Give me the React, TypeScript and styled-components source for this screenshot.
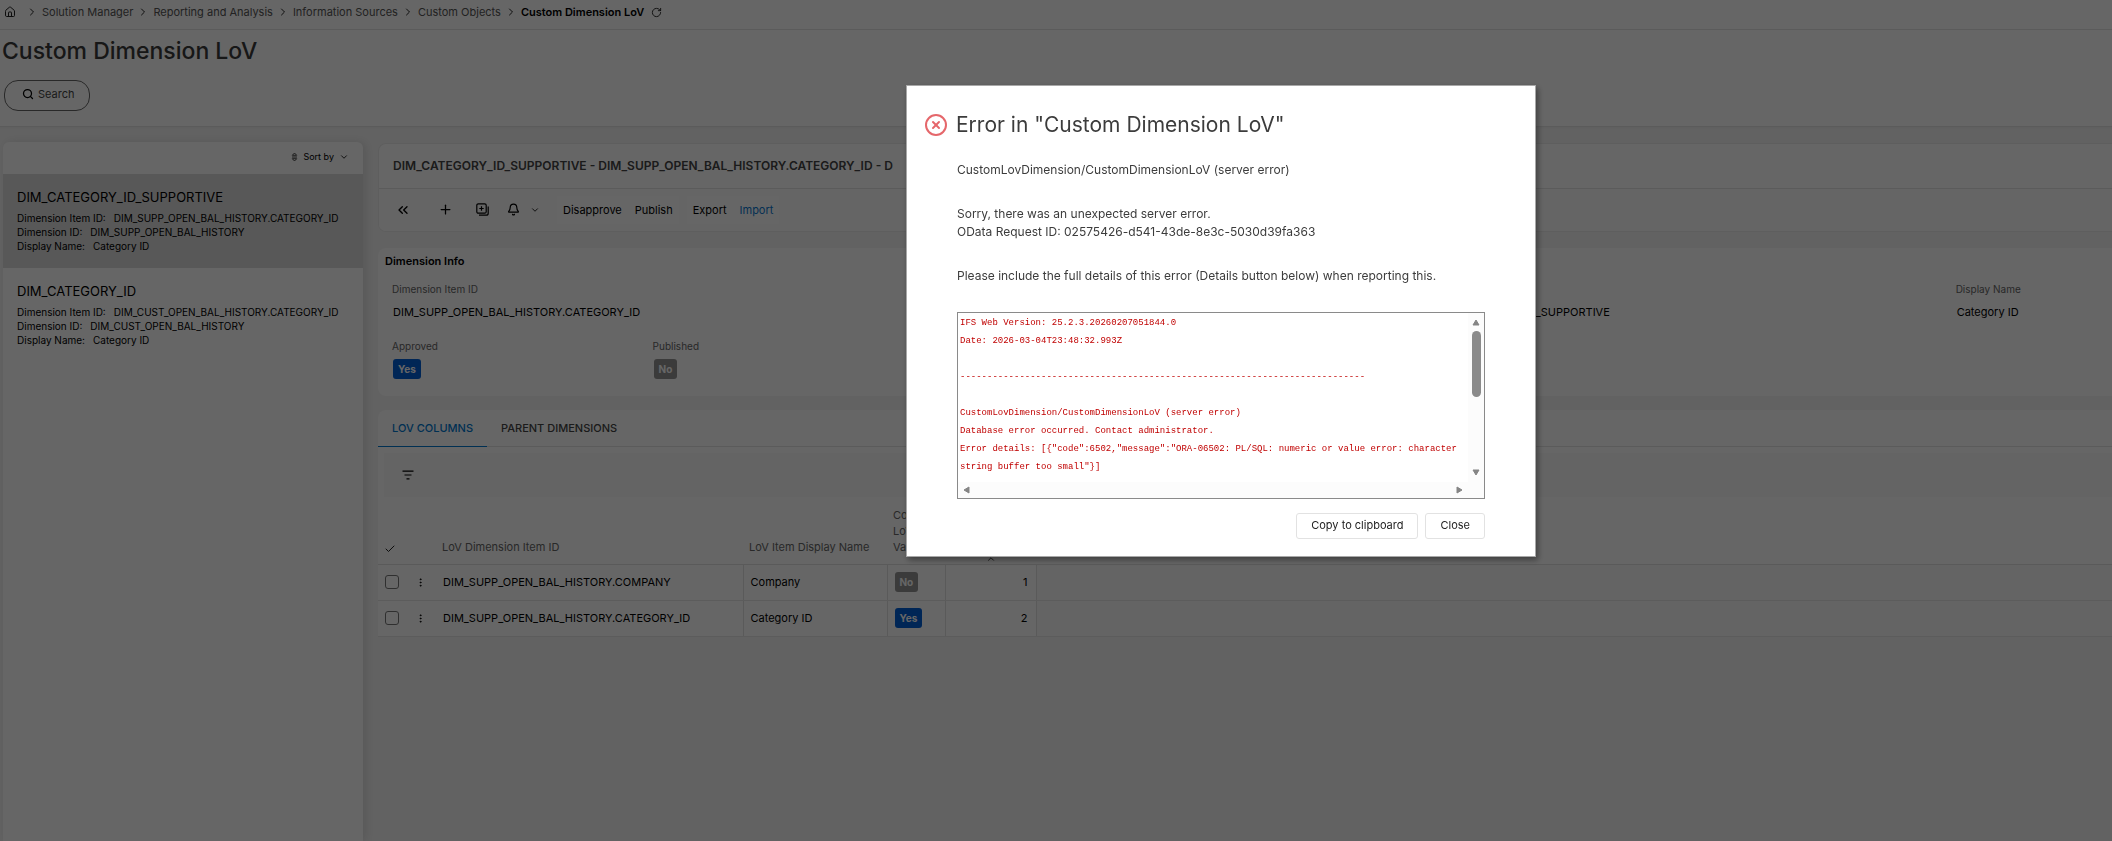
import React from 'react';
import styled, { createGlobalStyle } from 'styled-components';
import {
  Bell,
  Check,
  ChevronDown,
  ChevronRight,
  ChevronUp,
  ChevronsLeft,
  CircleX,
  EllipsisVertical,
  House,
  Plus,
  RotateCw,
  Search,
} from 'lucide-react';

const GlobalStyle = createGlobalStyle`
  *, *::before, *::after { box-sizing: border-box; }
  body {
    margin: 0;
    background: #f5f5f5;
    color: #000;
    font: 400 11px/16px Inter, "Liberation Sans", sans-serif;
    overflow: hidden;
  }
  button, input, textarea { font: inherit; color: inherit; margin: 0; }
  h1, h2, h3, p, dl, dd, ul, nav { margin: 0; padding: 0; }
`;

/* ---------- page frame ---------- */

const Page = styled.div`
  min-height: 100vh;
  display: flex;
  flex-direction: column;
`;

const PageHeader = styled.header`
  background: #fff;
  border-bottom: 1px solid #e4e4e4;
  box-shadow: 0 1px 2px #ececec;
`;

const Breadcrumbs = styled.nav`
  display: flex;
  align-items: center;
  gap: 4px;
  height: 30px;
  padding: 0 4px 5px;
  border-bottom: 1px solid #e4e4e4;
  color: #222;
  svg { flex: none; }
`;

const HomeLink = styled.a`
  display: flex;
  margin-right: 6px;
  color: inherit;
`;

const Crumb = styled.a<{ $current?: boolean }>`
  color: ${(p) => (p.$current ? '#000' : '#555')};
  font-weight: ${(p) => (p.$current ? 600 : 400)};
  text-decoration: none;
  white-space: nowrap;
`;

const IconButton = styled.button`
  display: flex;
  align-items: center;
  justify-content: center;
  padding: 0;
  border: 0;
  background: none;
`;

const RefreshButton = styled(IconButton)`
  margin-left: 3px;
`;

const PageTitle = styled.h1`
  padding: 7px 2px 0;
  font-size: 23px;
  line-height: 28px;
  font-weight: 500;
  color: #3a3a3a;
`;

const SearchRow = styled.div`
  padding: 15px 4px;
`;

const SearchButton = styled.button`
  display: flex;
  align-items: center;
  gap: 4px;
  height: 31px;
  padding: 0 14px 3px 17px;
  border: 1px solid #666;
  border-radius: 14px;
  background: #fff;
  color: #444;
`;

const Body = styled.div`
  flex: 1;
  display: flex;
  gap: 15px;
  padding: 15px 0 0 3px;
`;

/* ---------- record list ---------- */

const Sidebar = styled.aside`
  flex: none;
  width: 360px;
  border-radius: 6px 6px 0 0;
  background: #fff;
  box-shadow: 3px 0 8px #dcdcdc;
`;

const SortBar = styled.div`
  display: flex;
  justify-content: flex-end;
  align-items: center;
  height: 32px;
  padding: 0 14px 2px 0;
`;

const SortButton = styled.button`
  display: flex;
  align-items: center;
  gap: 5px;
  padding: 0;
  border: 0;
  background: none;
  font-size: 9px;
`;

const Record = styled.article<{ $selected?: boolean }>`
  padding: 15px 14px;
  background: ${(p) => (p.$selected ? '#dcdcdc' : '#fff')};
`;

const RecordTitle = styled.h3`
  margin-bottom: 6px;
  font-size: 13px;
  font-weight: 400;
  line-height: 16px;
`;

const RecordLine = styled.p`
  display: flex;
  gap: 8px;
  font-size: 10px;
  line-height: 14px;
  white-space: nowrap;
`;

/* ---------- detail area ---------- */

const Main = styled.main`
  flex: 1;
  min-width: 0;
`;

const Card = styled.section`
  overflow: hidden;
  border-radius: 8px 0 0 0;
  background: #fff;
`;

const HeadCard = styled(Card)`
  margin: 1px 0 16px;
  border: 1px solid #ebebeb;
  border-right: 0;
  border-radius: 8px 0 0 8px;
`;

const RecordHeading = styled.h2`
  padding: 14px;
  border-bottom: 1px solid #e4e4e4;
  font-size: 12px;
  line-height: 16px;
  font-weight: 600;
  color: #444;
  white-space: nowrap;
`;

const Toolbar = styled.div`
  display: flex;
  align-items: center;
  height: 42px;
  padding: 0 0 1px 12px;
  background: #fcfcfc;
`;

const ToolIcon = styled(IconButton)<{ $w: number }>`
  width: ${(p) => p.$w}px;
  height: 28px;
`;

const NotifyButton = styled(IconButton)`
  gap: 10px;
  height: 28px;
  margin: 0 17px 0 18px;
`;

const CommandGroup = styled.div`
  display: flex;
  gap: 13px;
  height: 28px;
  padding: 0 6px;
  margin-right: 8px;
  background: #fff;
`;

const Command = styled.button<{ $accent?: boolean }>`
  padding: 0;
  border: 0;
  background: none;
  color: ${(p) => (p.$accent ? '#0a78d0' : '#000')};
`;

const InfoCard = styled(Card)`
  height: 148px;
  padding: 5px 0 0 7px;
  border-radius: 8px 0 0 8px;
  margin-bottom: 14px;
`;

const SectionTitle = styled.h2`
  font-size: 11px;
  line-height: 16px;
  font-weight: 600;
`;

const FieldGrid = styled.dl`
  display: grid;
  grid-template-columns: repeat(6, minmax(0, 5fr)) minmax(0, 3fr);
  padding: 12px 0 0 7px;
`;

const Field = styled.div<{ $column: number }>`
  grid-column: ${(p) => p.$column};
  height: 57px;
  white-space: nowrap;
`;

const FieldLabel = styled.dt`
  font-size: 10px;
  color: #666;
`;

const FieldValue = styled.dd<{ $badge?: boolean }>`
  padding: ${(p) => (p.$badge ? '5px 0 0 1px' : '7px 0 0 1px')};
`;

const Badge = styled.span<{ $on?: boolean }>`
  display: inline-block;
  padding: 0 5px;
  border-radius: 3px;
  background: ${(p) => (p.$on ? '#0060d8' : '#949494')};
  color: #fff;
  font-weight: 700;
  font-size: 10px;
  line-height: 20px;
  vertical-align: top;
`;

const TabList = styled.div`
  display: flex;
  height: 37px;
  border-bottom: 1px solid #e4e4e4;
`;

const Tab = styled.button<{ $active?: boolean }>`
  height: 37px;
  padding: 0 14px;
  border: 0;
  border-bottom: ${(p) => (p.$active ? '1px solid #0078d0' : '1px solid transparent')};
  background: none;
  font-weight: 500;
  color: ${(p) => (p.$active ? '#0078d0' : '#444')};
`;

const FilterBar = styled.div`
  display: flex;
  align-items: center;
  height: 44px;
  margin: 6px 0 0 6px;
  padding-left: 18px;
  background: #fafafa;
`;

const Table = styled.table`
  width: 100%;
  border-collapse: collapse;
  table-layout: fixed;
`;

const Col = styled.col<{ $w?: number }>`
  width: ${(p) => (p.$w ? `${p.$w}px` : 'auto')};
`;

const HeadCell = styled.th`
  height: 67px;
  padding: 0 0 9px 6px;
  border-bottom: 1px solid #e0e0e0;
  color: #666;
  font-weight: 400;
  text-align: left;
  vertical-align: bottom;
  white-space: nowrap;
  svg { display: block; color: #222; }
`;

const SortedHeadCell = styled(HeadCell)`
  padding: 0;
  svg { margin: 0 auto; }
`;

const Cell = styled.td<{ $ruled?: boolean; $end?: boolean; $filler?: boolean }>`
  height: 36px;
  padding: ${(p) => (p.$end ? '0 8px 0 0' : '0 0 0 7px')};
  border-bottom: 1px solid #e6e6e6;
  border-right: ${(p) => (p.$ruled ? '1px solid #e0e0e0' : '0')};
  background: ${(p) => (p.$filler ? '#fafafa' : '#fff')};
  text-align: ${(p) => (p.$end ? 'right' : 'left')};
  white-space: nowrap;
`;

const Checkbox = styled.input`
  appearance: none;
  display: block;
  width: 14px;
  height: 14px;
  border: 1px solid #777;
  border-radius: 3px;
`;

/* ---------- error dialog ---------- */

const Backdrop = styled.div`
  position: fixed;
  inset: 0;
  padding-top: 85px;
  background: rgba(0, 0, 0, 0.6);
`;

const Dialog = styled.section`
  display: flex;
  flex-direction: column;
  width: 630px;
  margin-left: calc(50% - 150px);
  padding: 24px 50px 17px 17px;
  border: 1px solid #a8a8a8;
  background: #fff;
  box-shadow: 2px 3px 6px rgba(0, 0, 0, 0.4);
  color: #3c3c3c;
`;

const DialogTitle = styled.h2`
  display: flex;
  align-items: center;
  gap: 8px;
  font-size: 21px;
  line-height: 30px;
  font-weight: 400;
`;

const DialogBody = styled.div`
  padding-left: 33px;
  font-size: 12px;
  line-height: 18px;
`;

const Message = styled.p`
  margin-top: 26px;
  &:first-child { margin-top: 21px; }
`;

const LogFrame = styled.div`
  display: grid;
  grid-template-columns: 1fr 16px;
  grid-template-rows: 1fr 16px;
  height: 187px;
  margin-top: 27px;
  border: 1px solid #8a8a8a;
`;

const Log = styled.textarea`
  padding: 1px 2px 0;
  border: 0;
  outline: 0;
  resize: none;
  overflow: hidden;
  background: #fff;
  color: #c00000;
  font: 9px/18px "Liberation Mono", monospace;
`;

const ScrollTrack = styled.div<{ $horizontal?: boolean }>`
  display: flex;
  flex-direction: ${(p) => (p.$horizontal ? 'row' : 'column')};
  align-items: center;
  justify-content: space-between;
  padding: ${(p) => (p.$horizontal ? '0 5px' : '6px 0')};
  background: #fcfcfc;
`;

const ScrollThumb = styled.div`
  width: 9px;
  height: 66px;
  margin: 5px 0 auto;
  border-radius: 5px;
  background: #8b8b8b;
`;

const Actions = styled.div`
  display: flex;
  justify-content: flex-end;
  gap: 7px;
  margin-top: 14px;
`;

const ActionButton = styled.button`
  height: 26px;
  padding: 0 14px 2px;
  border: 1px solid #e2e2e2;
  border-radius: 3px;
  background: #fff;
  color: #222;
`;

/* ---------- drawings ---------- */

const SortIcon = () => (
  <svg width="7" height="10" viewBox="0 0 7 10" fill="none" stroke="#222">
    <path d="M1.300 3.300 3.500 1l2.200 2.300zM1.300 6.700 3.500 9l2.200-2.300zM1 5h5" strokeWidth=".8" />
  </svg>
);

const DuplicateIcon = () => (
  <svg width="13" height="13" viewBox="0 0 13 13" fill="none" stroke="#000">
    <rect x=".8" y=".8" width="9.400" height="9.400" rx="1.500" strokeWidth="1.2" />
    <path d="M5.500 3.300v4.400M3.300 5.500h4.400M12.200 3.500v6.700a2 2 0 0 1-2 2H3" strokeWidth="1.2" />
  </svg>
);

const FilterIcon = () => (
  <svg width="12" height="10" viewBox="0 0 12 10" stroke="#000" strokeWidth="1.2">
    <path d="M.5 1.200h11M2.500 5h7M4.500 8.800h3" />
  </svg>
);

const Arrow = ({ d, w = 8, h = 7 }: { d: string; w?: number; h?: number }) => (
  <svg width={w} height={h} viewBox={`0 0 ${w} ${h}`} fill="#858585" stroke="#858585" strokeLinejoin="round">
    <path d={d} />
  </svg>
);

/* ---------- data ---------- */

const trail = ['Solution Manager', 'Reporting and Analysis', 'Information Sources', 'Custom Objects'];

const records = [
  { title: 'DIM_CATEGORY_ID_SUPPORTIVE', dimension: 'DIM_SUPP_OPEN_BAL_HISTORY' },
  { title: 'DIM_CATEGORY_ID', dimension: 'DIM_CUST_OPEN_BAL_HISTORY' },
];

const rows = [
  { id: 'DIM_SUPP_OPEN_BAL_HISTORY.COMPANY', name: 'Company', on: false, order: 1 },
  { id: 'DIM_SUPP_OPEN_BAL_HISTORY.CATEGORY_ID', name: 'Category ID', on: true, order: 2 },
];

const log = [
  'IFS Web Version: 25.2.3.20260207051844.0',
  'Date: 2026-03-04T23:48:32.993Z',
  '',
  '-'.repeat(75),
  '',
  'CustomLovDimension/CustomDimensionLoV (server error)',
  'Database error occurred. Contact administrator.',
  'Error details: [{"code":6502,"message":"ORA-06502: PL/SQL: numeric or value error: character string buffer too small"}]',
].join('\n');

const YesNo = ({ on }: { on: boolean }) => <Badge $on={on}>{on ? 'Yes' : 'No'}</Badge>;

export default function App() {
  return (
    <>
      <GlobalStyle />
      <Page>
        <PageHeader>
          <Breadcrumbs aria-label="Breadcrumb">
            <HomeLink href="#" aria-label="Home"><House size={12} strokeWidth={2} /></HomeLink>
            {trail.map((name) => (
              <React.Fragment key={name}>
                <ChevronRight size={12} />
                <Crumb href="#">{name}</Crumb>
              </React.Fragment>
            ))}
            <ChevronRight size={12} />
            <Crumb href="#" $current>Custom Dimension LoV</Crumb>
            <RefreshButton aria-label="Refresh"><RotateCw size={11} /></RefreshButton>
          </Breadcrumbs>
          <PageTitle>Custom Dimension LoV</PageTitle>
          <SearchRow>
            <SearchButton><Search size={12} strokeWidth={2.5} color="#000" />Search</SearchButton>
          </SearchRow>
        </PageHeader>

        <Body>
          <Sidebar>
            <SortBar>
              <SortButton><SortIcon />Sort by<ChevronDown size={10} /></SortButton>
            </SortBar>
            {records.map((r, i) => (
              <Record key={r.title} $selected={i === 0}>
                <RecordTitle>{r.title}</RecordTitle>
                <RecordLine><span>Dimension Item ID:</span><span>{r.dimension}.CATEGORY_ID</span></RecordLine>
                <RecordLine><span>Dimension ID:</span><span>{r.dimension}</span></RecordLine>
                <RecordLine><span>Display Name:</span><span>Category ID</span></RecordLine>
              </Record>
            ))}
          </Sidebar>

          <Main>
            <HeadCard>
              <RecordHeading>
                DIM_CATEGORY_ID_SUPPORTIVE - DIM_SUPP_OPEN_BAL_HISTORY.CATEGORY_ID - D
              </RecordHeading>
              <Toolbar>
                <ToolIcon $w={24} aria-label="Collapse"><ChevronsLeft size={16} strokeWidth={2} /></ToolIcon>
                <ToolIcon $w={60} aria-label="Add"><Plus size={15} strokeWidth={2} /></ToolIcon>
                <ToolIcon $w={14} aria-label="Duplicate"><DuplicateIcon /></ToolIcon>
                <NotifyButton aria-label="Notifications">
                  <Bell size={13} strokeWidth={2.2} />
                  <ChevronDown size={10} />
                </NotifyButton>
                <CommandGroup>
                  <Command>Disapprove</Command>
                  <Command>Publish</Command>
                </CommandGroup>
                <CommandGroup>
                  <Command>Export</Command>
                  <Command $accent>Import</Command>
                </CommandGroup>
              </Toolbar>
            </HeadCard>

            <InfoCard>
              <SectionTitle>Dimension Info</SectionTitle>
              <FieldGrid>
                <Field $column={1}>
                  <FieldLabel>Dimension Item ID</FieldLabel>
                  <FieldValue>DIM_SUPP_OPEN_BAL_HISTORY.CATEGORY_ID</FieldValue>
                </Field>
                <Field $column={5}>
                  <FieldLabel>Description</FieldLabel>
                  <FieldValue>DIM_CATEGORY_ID_SUPPORTIVE</FieldValue>
                </Field>
                <Field $column={7}>
                  <FieldLabel>Display Name</FieldLabel>
                  <FieldValue>Category ID</FieldValue>
                </Field>
                <Field $column={1}>
                  <FieldLabel>Approved</FieldLabel>
                  <FieldValue $badge><YesNo on /></FieldValue>
                </Field>
                <Field $column={2}>
                  <FieldLabel>Published</FieldLabel>
                  <FieldValue $badge><YesNo on={false} /></FieldValue>
                </Field>
              </FieldGrid>
            </InfoCard>

            <Card>
              <TabList role="tablist">
                <Tab role="tab" aria-selected $active>LOV COLUMNS</Tab>
                <Tab role="tab" aria-selected={false}>PARENT DIMENSIONS</Tab>
              </TabList>
              <FilterBar>
                <IconButton aria-label="Filter"><FilterIcon /></IconButton>
              </FilterBar>
              <Table>
                <colgroup>
                  <Col $w={30} />
                  <Col $w={28} />
                  <Col $w={307} />
                  <Col $w={144} />
                  <Col $w={58} />
                  <Col $w={91} />
                  <Col />
                </colgroup>
                <thead>
                  <tr>
                    <HeadCell aria-label="Select"><Check size={12} strokeWidth={2} /></HeadCell>
                    <HeadCell />
                    <HeadCell>LoV Dimension Item ID</HeadCell>
                    <HeadCell>LoV Item Display Name</HeadCell>
                    <HeadCell>Controls<br />LoV<br />Values</HeadCell>
                    <SortedHeadCell aria-label="Order"><ChevronUp size={10} /></SortedHeadCell>
                    <HeadCell />
                  </tr>
                </thead>
                <tbody>
                  {rows.map((row) => (
                    <tr key={row.id}>
                      <Cell><Checkbox type="checkbox" aria-label={`Select ${row.id}`} /></Cell>
                      <Cell>
                        <IconButton aria-label="Row actions"><EllipsisVertical size={11} /></IconButton>
                      </Cell>
                      <Cell $ruled>{row.id}</Cell>
                      <Cell $ruled>{row.name}</Cell>
                      <Cell $ruled><YesNo on={row.on} /></Cell>
                      <Cell $ruled $end>{row.order}</Cell>
                      <Cell $filler />
                    </tr>
                  ))}
                </tbody>
              </Table>
            </Card>
          </Main>
        </Body>
      </Page>

      <Backdrop>
        <Dialog role="dialog" aria-modal="true" aria-labelledby="error-title">
          <DialogTitle id="error-title">
            <CircleX size={24} strokeWidth={2} color="#e5676b" />
            Error in "Custom Dimension LoV"
          </DialogTitle>
          <DialogBody>
            <Message>CustomLovDimension/CustomDimensionLoV (server error)</Message>
            <Message>
              Sorry, there was an unexpected server error.<br />
              OData Request ID: 02575426-d541-43de-8e3c-5030d39fa363
            </Message>
            <Message>
              Please include the full details of this error (Details button below) when reporting this.
            </Message>
            <LogFrame>
              <Log readOnly aria-label="Error details" value={log} />
              <ScrollTrack>
                <Arrow d="M4 1 7 6H1z" />
                <ScrollThumb />
                <Arrow d="M4 6 1 1h6z" />
              </ScrollTrack>
              <ScrollTrack $horizontal>
                <Arrow w={7} h={8} d="M1 4 6 1v6z" />
                <Arrow w={7} h={8} d="M6 4 1 7V1z" />
              </ScrollTrack>
              <ScrollTrack />
            </LogFrame>
          </DialogBody>
          <Actions>
            <ActionButton>Copy to clipboard</ActionButton>
            <ActionButton>Close</ActionButton>
          </Actions>
        </Dialog>
      </Backdrop>
    </>
  );
}
